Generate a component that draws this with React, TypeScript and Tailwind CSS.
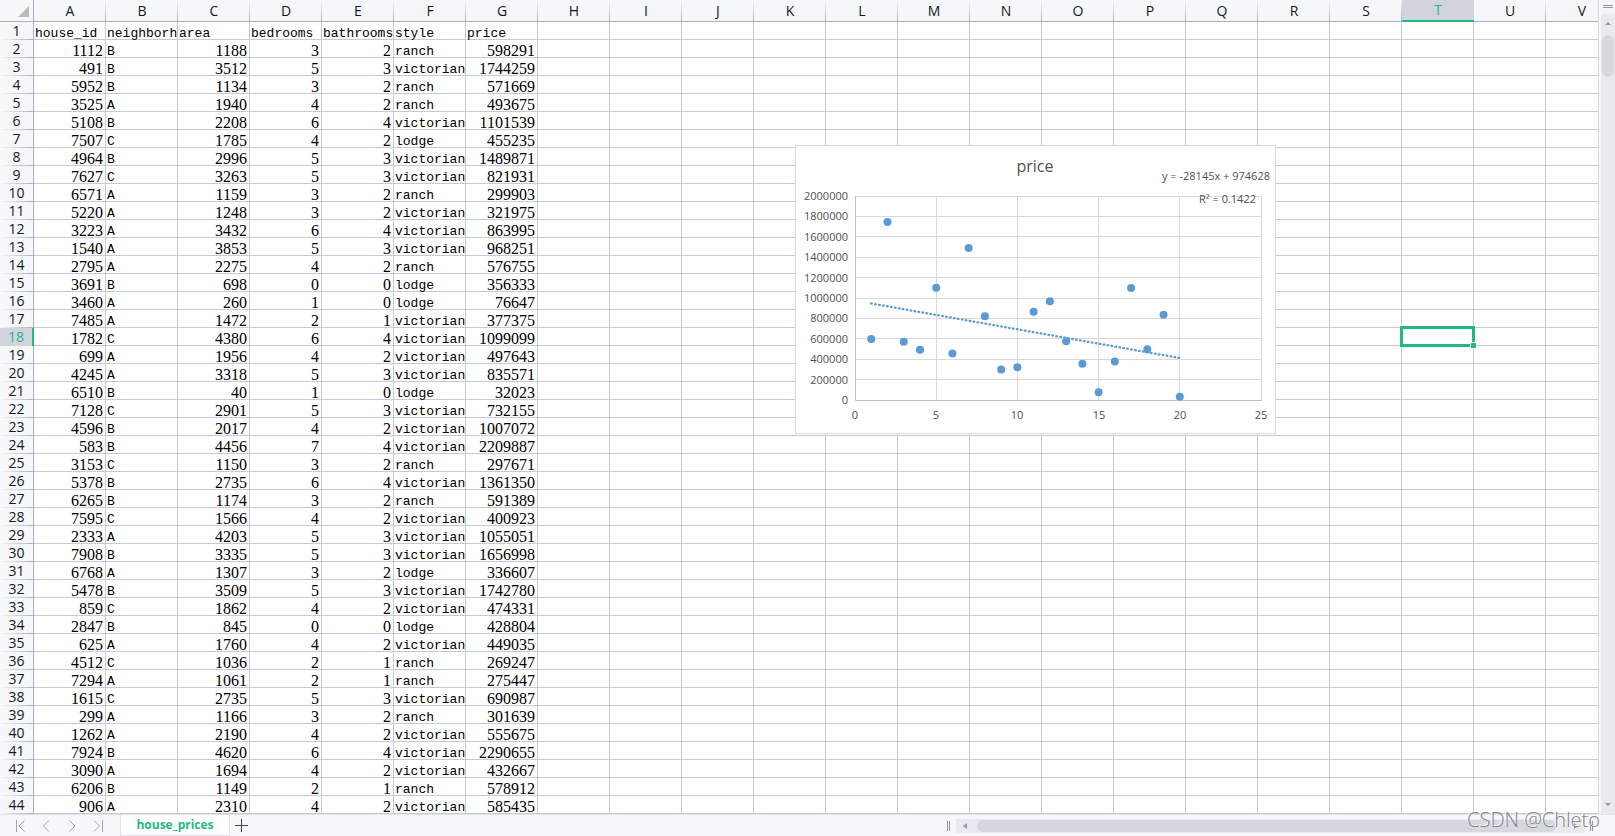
import type { ReactNode } from 'react';

type House = [number, string, number, number, number, string, number];

const HOUSES: House[] = [
  [1112, 'B', 1188, 3, 2, 'ranch', 598291],
  [491, 'B', 3512, 5, 3, 'victorian', 1744259],
  [5952, 'B', 1134, 3, 2, 'ranch', 571669],
  [3525, 'A', 1940, 4, 2, 'ranch', 493675],
  [5108, 'B', 2208, 6, 4, 'victorian', 1101539],
  [7507, 'C', 1785, 4, 2, 'lodge', 455235],
  [4964, 'B', 2996, 5, 3, 'victorian', 1489871],
  [7627, 'C', 3263, 5, 3, 'victorian', 821931],
  [6571, 'A', 1159, 3, 2, 'ranch', 299903],
  [5220, 'A', 1248, 3, 2, 'victorian', 321975],
  [3223, 'A', 3432, 6, 4, 'victorian', 863995],
  [1540, 'A', 3853, 5, 3, 'victorian', 968251],
  [2795, 'A', 2275, 4, 2, 'ranch', 576755],
  [3691, 'B', 698, 0, 0, 'lodge', 356333],
  [3460, 'A', 260, 1, 0, 'lodge', 76647],
  [7485, 'A', 1472, 2, 1, 'victorian', 377375],
  [1782, 'C', 4380, 6, 4, 'victorian', 1099099],
  [699, 'A', 1956, 4, 2, 'victorian', 497643],
  [4245, 'A', 3318, 5, 3, 'victorian', 835571],
  [6510, 'B', 40, 1, 0, 'lodge', 32023],
  [7128, 'C', 2901, 5, 3, 'victorian', 732155],
  [4596, 'B', 2017, 4, 2, 'victorian', 1007072],
  [583, 'B', 4456, 7, 4, 'victorian', 2209887],
  [3153, 'C', 1150, 3, 2, 'ranch', 297671],
  [5378, 'B', 2735, 6, 4, 'victorian', 1361350],
  [6265, 'B', 1174, 3, 2, 'ranch', 591389],
  [7595, 'C', 1566, 4, 2, 'victorian', 400923],
  [2333, 'A', 4203, 5, 3, 'victorian', 1055051],
  [7908, 'B', 3335, 5, 3, 'victorian', 1656998],
  [6768, 'A', 1307, 3, 2, 'lodge', 336607],
  [5478, 'B', 3509, 5, 3, 'victorian', 1742780],
  [859, 'C', 1862, 4, 2, 'victorian', 474331],
  [2847, 'B', 845, 0, 0, 'lodge', 428804],
  [625, 'A', 1760, 4, 2, 'victorian', 449035],
  [4512, 'C', 1036, 2, 1, 'ranch', 269247],
  [7294, 'A', 1061, 2, 1, 'ranch', 275447],
  [1615, 'C', 2735, 5, 3, 'victorian', 690987],
  [299, 'A', 1166, 3, 2, 'ranch', 301639],
  [1262, 'A', 2190, 4, 2, 'victorian', 555675],
  [7924, 'B', 4620, 6, 4, 'victorian', 2290655],
  [3090, 'A', 1694, 4, 2, 'victorian', 432667],
  [6206, 'B', 1149, 2, 1, 'ranch', 578912],
  [906, 'A', 2310, 4, 2, 'victorian', 585435],
];

const FIELDS = ['house_id', 'neighborhood', 'area', 'bedrooms', 'bathrooms', 'style', 'price'];
const ROWS: (string | number)[][] = [FIELDS, ...HOUSES];
const COLUMNS = 'ABCDEFGHIJKLMNOPQRSTUV'.split('');
const ACTIVE = { column: 'T', row: 18 };

function ColumnHeader({ name }: { name: string }) {
  const active = name === ACTIVE.column;
  return (
    <th
      scope="col"
      className={
        active
          ? 'h-[22px] border-b-2 border-[#1fbb7d] bg-[#d1d4dd] p-0 font-normal text-[#1fbb7d]'
          : 'h-[22px] border-b border-[#a9afc8] bg-[#f5f7f9] bg-[linear-gradient(to_bottom,#f5f7f9,#a9afc8)] bg-[length:1px_100%] bg-right bg-no-repeat p-0 font-normal text-[#16181d]'
      }
    >
      <div className="h-[20px] leading-[20px]">{name}</div>
    </th>
  );
}

function RowHeader({ index }: { index: number }) {
  const active = index === ACTIVE.row;
  return (
    <th
      scope="row"
      className={
        active
          ? 'h-[18px] border-r-2 border-[#1fbb7d] bg-[#d1d4dd] p-0 font-normal text-[#1fbb7d]'
          : 'h-[18px] border-r border-[#a9afc8] bg-[#f5f7f9] bg-[linear-gradient(to_right,#f5f7f9,#a9afc8)] bg-[length:100%_1px] bg-bottom bg-no-repeat p-0 font-normal text-[#16181d]'
      }
    >
      <div className="h-[18px] leading-[18px]">{index}</div>
    </th>
  );
}

function Cell({ value, children }: { value?: string | number; children?: ReactNode }) {
  return (
    <td className="relative h-[18px] border-r border-b border-[#c5cad9] p-0">
      {value !== undefined && (
        <div
          className={
            typeof value === 'number'
              ? "h-[17px] overflow-x-clip pr-[2px] text-right font-['Liberation_Serif',serif] text-[16px] leading-[21px]"
              : "h-[17px] overflow-x-clip pl-px font-['Liberation_Mono',monospace] text-[13px] leading-[23px] whitespace-nowrap"
          }
        >
          {value}
        </div>
      )}
      {children}
    </td>
  );
}

function Selection() {
  return (
    <>
      <div className="absolute -top-[2px] -right-[2px] -bottom-[2px] -left-[2px] z-10 border-3 border-[#1fbb7d]" />
      <div className="absolute -right-[4px] -bottom-[4px] z-10 size-[7px] border border-white bg-[#1fbb7d]" />
    </>
  );
}

function Grid() {
  return (
    <table className="w-[1618px] table-fixed border-separate border-spacing-0 font-['Open_Sans',sans-serif] text-[14px]">
      <colgroup>
        <col className="w-[34px]" />
        {COLUMNS.map((name) => (
          <col key={name} className="w-[72px]" />
        ))}
      </colgroup>
      <thead>
        <tr>
          <td className="h-[22px] border-r border-b border-[#a9afc8] bg-[#f5f7f9] p-0">
            <button type="button" aria-label="Select all" className="flex h-[20px] w-full items-end justify-end pr-1 pb-1">
              <svg width="11" height="11" viewBox="0 0 11 11">
                <path d="M11 0V11H0Z" fill="#bababa" />
              </svg>
            </button>
          </td>
          {COLUMNS.map((name) => (
            <ColumnHeader key={name} name={name} />
          ))}
        </tr>
      </thead>
      <tbody>
        {ROWS.map((row, i) => (
          <tr key={i}>
            <RowHeader index={i + 1} />
            {COLUMNS.map((name, c) => (
              <Cell key={name} value={row[c]}>
                {name === ACTIVE.column && i + 1 === ACTIVE.row && <Selection />}
              </Cell>
            ))}
          </tr>
        ))}
      </tbody>
    </table>
  );
}

const PLOT = { left: 60, right: 466, top: 51, bottom: 255 };
const px = (x: number) => PLOT.left + ((PLOT.right - PLOT.left) * x) / 25;
const py = (y: number) => PLOT.bottom - ((PLOT.bottom - PLOT.top) * y) / 2000000;
const snap = (n: number) => Math.floor(n) + 0.5;
const trend = (x: number) => 974628 - 28145 * x;

function PriceChart() {
  const yTicks = Array.from({ length: 11 }, (_, i) => i * 200000);
  const xTicks = [0, 5, 10, 15, 20, 25];
  return (
    <svg
      role="img"
      aria-label="price"
      width="481"
      height="289"
      viewBox="0 0 481 289"
      className="absolute top-[145px] left-[795px] bg-white font-['Open_Sans',sans-serif] text-[11px]"
    >
      <rect x="0.5" y="0.5" width="480" height="288" fill="#fff" stroke="#d9d9d9" />
      <g stroke="#d9d9d9">
        {yTicks.slice(1).map((v) => (
          <line key={v} x1={PLOT.left} x2={PLOT.right + 1} y1={snap(py(v))} y2={snap(py(v))} />
        ))}
        {xTicks.slice(1).map((v) => (
          <line key={v} x1={snap(px(v))} x2={snap(px(v))} y1={PLOT.top} y2={PLOT.bottom} />
        ))}
      </g>
      <path d={`M${PLOT.left + 0.5} ${PLOT.top}V${PLOT.bottom + 0.5}H${PLOT.right + 1}`} fill="none" stroke="#bfbfbf" />
      <g fill="#505050">
        <text x="240" y="27" textAnchor="middle" fontSize="16">price</text>
        {yTicks.map((v) => (
          <text key={v} x="53" y={Math.round(py(v)) + 4} textAnchor="end">{v}</text>
        ))}
        {xTicks.map((v) => (
          <text key={v} x={Math.round(px(v))} y="274" textAnchor="middle">{v}</text>
        ))}
        <text x="475" y="35" textAnchor="end">y = -28145x + 974628</text>
        <text x="461" y="58" textAnchor="end">R² = 0.1422</text>
      </g>
      <line
        x1={px(1)}
        y1={py(trend(1))}
        x2={px(20)}
        y2={py(trend(20))}
        stroke="#5b9bd5"
        strokeWidth="2.3"
        strokeLinecap="round"
        strokeDasharray="0.6 3.4"
      />
      <g fill="#5b9bd5">
        {HOUSES.slice(0, 20).map((h, i) => (
          <circle key={h[0]} cx={px(i + 1)} cy={py(h[6])} r="4" />
        ))}
      </g>
    </svg>
  );
}

function VerticalScrollbar() {
  return (
    <div className="flex w-[17px] flex-none flex-col border-l border-[#d9dce5] bg-[#f5f7f9] pl-[2px]">
      <div className="flex h-[14px] flex-none flex-col items-center gap-px pt-[5px]">
        <div className="h-px w-[10px] bg-[#8d96b0]" />
        <div className="h-px w-[10px] bg-[#8d96b0]" />
      </div>
      <div className="flex flex-1 flex-col items-center bg-[#e9eaf0] px-px pt-2 pb-2">
        <svg width="6" height="3" viewBox="0 0 6 3">
          <path d="M3 0L6 3H0Z" fill="#8d96b0" />
        </svg>
        <div className="mt-[10px] h-[42px] w-full rounded-full bg-[#d5d8df]" />
        <svg width="6" height="3" viewBox="0 0 6 3" className="mt-auto">
          <path d="M0 0H6L3 3Z" fill="#8d96b0" />
        </svg>
      </div>
    </div>
  );
}

const NAV = [
  { label: 'First sheet', d: 'M1.500 0V12M9.500 0.500L4 6L9.500 11.500' },
  { label: 'Previous sheet', d: 'M8 0.500L2.500 6L8 11.500' },
  { label: 'Next sheet', d: 'M2.500 0.500L8 6L2.500 11.500' },
  { label: 'Last sheet', d: 'M1 0.500L6.500 6L1 11.500M9.500 0V12' },
];

function Splitter() {
  return <div className="h-[10px] w-[3px] flex-none border-x border-[#8d96b0]" />;
}

function BottomBar() {
  return (
    <footer className="flex h-[22px] flex-none border-t border-[#e0e3ea] bg-[#f5f7f9]">
      <div className="flex min-w-0 flex-1 items-center">
        <nav className="flex gap-[15px] pl-[15px]">
          {NAV.map((item) => (
            <button key={item.label} type="button" aria-label={item.label}>
              <svg width="11" height="12" viewBox="0 0 11 12" fill="none" stroke="#a3a5aa">
                <path d={item.d} />
              </svg>
            </button>
          ))}
        </nav>
        <button
          type="button"
          className="ml-4 h-[21px] w-[110px] flex-none border-x border-b border-[#e0e3ea] bg-white font-['Open_Sans',sans-serif] text-[12px] leading-[20px] font-bold text-[#1fbb7d]"
        >
          house_prices
        </button>
        <button type="button" aria-label="Add sheet" className="ml-[5px]">
          <svg width="13" height="13" viewBox="0 0 13 13" stroke="#3d4354">
            <path d="M6.500 0V13M0 6.500H13" />
          </svg>
        </button>
      </div>
      <div className="flex w-5/12 flex-none items-center pr-[22px] pl-[5px]">
        <Splitter />
        <div className="mr-[5px] ml-[6px] flex h-[14px] flex-1 items-center bg-[#e9eaf0] px-[7px]">
          <svg width="4" height="6" viewBox="0 0 4 6">
            <path d="M4 0V6L0 3Z" fill="#8d96b0" />
          </svg>
          <div className="mr-[18px] ml-[10px] h-[12px] flex-1 rounded-full bg-[#d5d8df]" />
          <svg width="4" height="6" viewBox="0 0 4 6">
            <path d="M0 0V6L4 3Z" fill="#8d96b0" />
          </svg>
        </div>
        <Splitter />
      </div>
    </footer>
  );
}

export default function App() {
  return (
    <div className="relative flex min-h-screen flex-col overflow-hidden bg-white text-black">
      <div className="flex flex-1">
        <main className="relative min-w-0 flex-1 overflow-hidden">
          <Grid />
          <PriceChart />
        </main>
        <VerticalScrollbar />
      </div>
      <BottomBar />
      <div className="pointer-events-none absolute right-[15px] bottom-[3px] font-['Open_Sans',sans-serif] text-[20px] leading-[26px] font-light text-[#808287] [text-shadow:-1px_-1px_0_#ffffff]">
        CSDN @Chleto
      </div>
    </div>
  );
}
